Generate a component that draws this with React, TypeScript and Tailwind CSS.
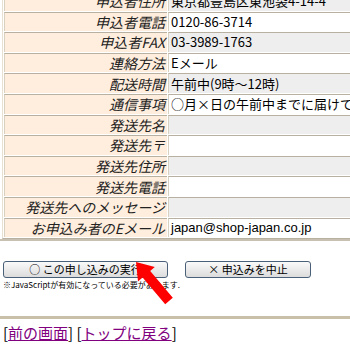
import React from "react";

const rows: { label: string; value: string; gray: boolean; latin?: boolean }[] = [
  { label: "申込者住所", value: "東京都豊島区東池袋4-14-4", gray: true },
  { label: "申込者電話", value: "0120-86-3714", gray: false },
  { label: "申込者FAX", value: "03-3989-1763", gray: true },
  { label: "連絡方法", value: "Eメール", gray: false },
  { label: "配送時間", value: "午前中(9時～12時)", gray: true },
  { label: "通信事項", value: "○月×日の午前中までに届けてください", gray: false },
  { label: "発送先名", value: "", gray: true },
  { label: "発送先〒", value: "", gray: false },
  { label: "発送先住所", value: "", gray: true },
  { label: "発送先電話", value: "", gray: false },
  { label: "発送先へのメッセージ", value: "", gray: true },
  { label: "お申込み者のEメール", value: "japan@shop-japan.co.jp", gray: false, latin: true },
];

const jp = { fontFamily: '"Noto Sans CJK JP", sans-serif' };
const latin = { fontFamily: '"Liberation Sans", "Noto Sans CJK JP", sans-serif' };

export default function App() {
  return (
    <div className="w-[350px] h-[350px] overflow-hidden bg-white text-black" style={jp}>
      <div className="-mt-[11px] ml-[2px] w-[440px] border border-[#e8e0d0] border-b-[#b8b0a0] border-r-[#b8b0a0]">
        <table className="w-full border-separate border-spacing-[1px]">
          <tbody>
            {rows.map((r) => (
              <tr key={r.label}>
                <td className="h-[19.6px] w-[163px] bg-[#ffeedd] border-t border-l border-t-[#b8b0a0] border-l-[#d8d0c0] pr-[2px] text-right italic text-[14px] leading-[18px] whitespace-nowrap text-[#222]">
                  {r.label}
                </td>
                <td
                  className={`h-[19.6px] border-t border-l border-t-[#b8b0a0] border-l-[#d8d0c0] pl-[2px] text-[13px] leading-[18px] whitespace-nowrap ${
                    r.gray ? "bg-[#eeeeee]" : "bg-white"
                  }`}
                  style={r.latin ? latin : undefined}
                >
                  {r.value}
                </td>
              </tr>
            ))}
          </tbody>
        </table>
      </div>

      <div className="h-[2px] bg-[#c8c0b0]" />

      <div className="relative pt-[20px] pl-[3px]">
        <div className="flex gap-[17px]">
          <button className="w-[165px] h-[17px] rounded-[3px] border border-[#4a6078] bg-gradient-to-b from-[#fafafa] to-[#dcdcdc] text-[11px] leading-[15px] text-black">
            ○ この申し込みの実行
          </button>
          <button className="w-[126px] h-[17px] rounded-[3px] border border-[#4a6078] bg-gradient-to-b from-[#fafafa] to-[#dcdcdc] text-[11px] leading-[15px] text-black">
            × 申込みを中止
          </button>
        </div>
        <p className="mt-[2px] text-[8px] leading-[10px]">※JavaScriptが有効になっている必要があります.</p>
        <svg className="absolute left-[134px] top-[19px]" width="42" height="46" viewBox="0 0 42 46">
          <polygon
            points="2,2 20.8,7 16.2,10.9 38.8,37.7 31.2,44.3 8.6,17.5 4,21.4"
            fill="#ff0000"
          />
        </svg>
      </div>

      <div className="mt-[26px] h-[3px] bg-[#c8c0a8]" />

      <div className="pt-[4px] pl-[3px] text-[15px] leading-[20px]">
        [<a href="#" className="text-[#800080] underline">前の画面</a>] [
        <a href="#" className="text-[#800080] underline">トップに戻る</a>]
      </div>
    </div>
  );
}
